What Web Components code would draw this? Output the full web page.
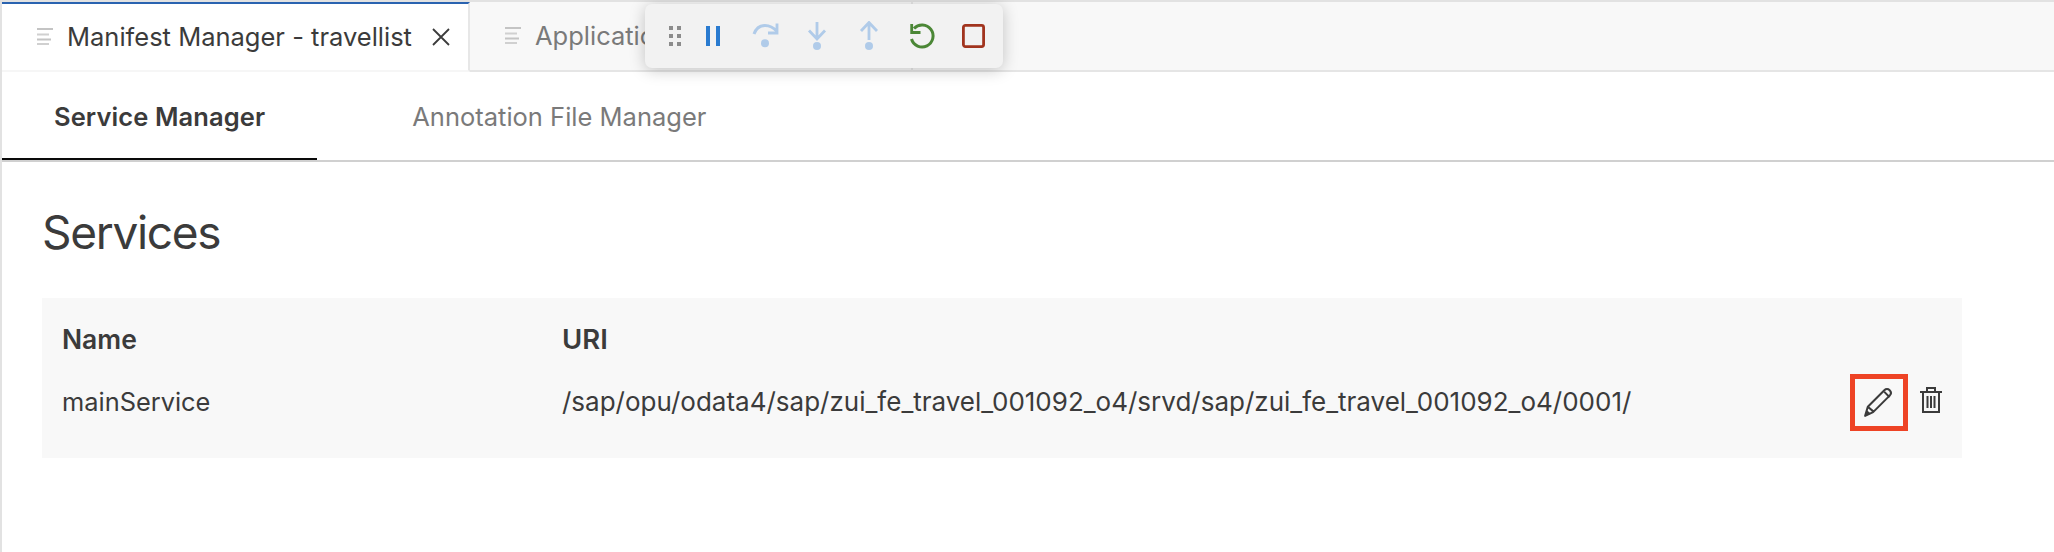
<!DOCTYPE html>
<html>
<head>
<meta charset="utf-8">
<title>Manifest Manager</title>
<style>
    html, body { margin: 0; height: 100%; background: #fff; overflow: hidden; }
    body { font-family: Inter, "Liberation Sans", sans-serif; color: #3b3b3b; }
</style>
</head>
<body>

<template id="editor-tab-template">
    <style>
        :host {
            display: flex;
            align-items: center;
            box-sizing: border-box;
            height: 70px;
            padding: 0 18px 0 35px;
            background: #f8f8f8;
            color: #7a7a7a;
            font-size: 25.5px;
            white-space: nowrap;
            flex: none;
            border-right: 2px solid #e7e7e7;
            border-bottom: 2px solid #e5e5e5;
        }
        :host([active]) {
            background: #fff;
            color: #3b3b3b;
            border-top: 2px solid #2a63b0;
            border-bottom: 2px solid #f6f6f6;
        }
        svg.doc { width: 16px; height: 18px; margin-right: 14px; flex: none; }
        svg.close { width: 18px; height: 18px; margin-left: 20px; flex: none; display: none; }
        :host([active]) svg.close { display: block; }
        .label { overflow: hidden; margin-top: -1px; }
    </style>
    <svg class="doc" viewBox="0 0 16 18"><path d="M0 1h16M0 11.500h14" stroke="#c4c4c4" stroke-width="2" fill="none"/><path d="M0 6.500h12M0 16h12" stroke="#d0d0d0" stroke-width="2" fill="none"/></svg>
    <span class="label"><slot></slot></span>
    <svg class="close" viewBox="0 0 18 18"><path d="M1 1l16 16M17 1L1 17" stroke="#3b3b3b" stroke-width="1.800" fill="none"/></svg>
</template>

<template id="debug-toolbar-template">
    <style>
        :host {
            position: absolute;
            left: 643px;
            top: 4px;
            width: 358px;
            height: 64px;
            display: flex;
            align-items: center;
            gap: 22px;
            padding-left: 24px;
            box-sizing: border-box;
            background: #f2f2f2;
            border-radius: 7px;
            box-shadow: 0 2px 16px rgba(0,0,0,.22);
        }
        svg { display: block; flex: none; width: 30px; height: 30px; }
        svg.grip { width: 12px; height: 20px; margin-right: -5px; }
    </style>
    <svg class="grip" viewBox="0 0 12 20" fill="#8c8c8c">
        <rect x="0" y="0" width="4" height="4"/><rect x="8" y="0" width="4" height="4"/>
        <rect x="0" y="8" width="4" height="4"/><rect x="8" y="8" width="4" height="4"/>
        <rect x="0" y="16" width="4" height="4"/><rect x="8" y="16" width="4" height="4"/>
    </svg>
    <svg viewBox="0 0 30 30"><rect x="8" y="5" width="4" height="20" fill="#2a7bd0"/><rect x="18" y="5" width="4" height="20" fill="#2a7bd0"/></svg>
    <svg viewBox="0 0 30 30"><path d="M4 13C6 7.500 10.500 4.500 15 4.500c4.500 0 8 1.500 12 6" stroke="#b0cbe9" stroke-width="3" fill="none"/><path d="M27 2.500v9.500h-9" stroke="#b0cbe9" stroke-width="2.800" fill="none"/><circle cx="15" cy="22.300" r="4" fill="#b0cbe9"/></svg>
    <svg viewBox="0 0 30 30"><path d="M15 1v17M7 9.500l8 8.500 8-8.500" stroke="#b0cbe9" stroke-width="2.800" fill="none"/><circle cx="15" cy="25" r="4" fill="#b0cbe9"/></svg>
    <svg viewBox="0 0 30 30"><path d="M15 19V2M7 10l8-8.500 8 8.500" stroke="#b0cbe9" stroke-width="2.800" fill="none"/><circle cx="15" cy="25" r="4" fill="#b0cbe9"/></svg>
    <svg viewBox="0 0 30 30"><path d="M8 7.500A11 11 0 1 1 5.500 18" stroke="#4b8736" stroke-width="3" fill="none"/><path d="M5.700 3v8.500h8.800" stroke="#4b8736" stroke-width="2.800" fill="none"/></svg>
    <svg viewBox="0 0 30 30"><rect x="5.400" y="4.400" width="20.200" height="21.200" rx="2" stroke="#a1341e" stroke-width="2.800" fill="none"/></svg>
</template>

<template id="sub-tab-template">
    <style>
        :host {
            display: block;
            box-sizing: border-box;
            height: 90px;
            padding: 2px 52px 0;
            line-height: 85px;
            flex: none;
            font-size: 25.5px;
            color: #7a7a7a;
            white-space: nowrap;
            margin-left: 43px;
        }
        :host([active]) {
            color: #3b3b3b;
            font-weight: 600;
            border-bottom: 2px solid #0a0a0a;
            height: 88px;
            line-height: 85px;
            margin-left: 0;
            letter-spacing: .1px;
        }
    </style>
    <slot></slot>
</template>

<template id="sub-tabs-template">
    <style>
        :host { display: flex; align-items: flex-start; height: 90px; box-shadow: inset 0 -2px 0 #d0d0d0; }
    </style>
    <slot></slot>
</template>

<template id="services-table-template">
    <style>
        :host {
            display: block;
            box-sizing: border-box;
            margin: 0 0 0 40px;
            width: 1920px;
            height: 160px;
            background: #f8f8f8;
            padding: 0 20px;
            font-size: 26px;
            color: #3b3b3b;
        }
        .row { display: grid; grid-template-columns: 500px 1fr; align-items: center; }
        .head { height: 62px; padding-top: 10px; font-weight: 600; font-size: 26.5px; }
        .head .uri { font-size: 27.5px; }
        .body { height: 64px; }
        .actions { display: flex; align-items: center; }
        .cell-name { font-size: 25.4px; margin-top: -2px; }
        .cell-uri { display: flex; align-items: center; justify-content: space-between; }
        .uri-text { margin-top: -2px; }
        .edit {
            box-sizing: border-box;
            width: 58px;
            height: 57px;
            border: 5px solid #ee4325;
            display: flex;
            align-items: center;
            justify-content: center;
            margin-right: 12px;
        }
        svg { display: block; }
        .del { margin-top: -5px; }
    </style>
    <div class="row head"><div>Name</div><div class="uri">URI</div></div>
    <div class="row body">
        <div class="cell-name"><slot name="name"></slot></div>
        <div class="cell-uri">
            <div class="uri-text"><slot name="uri"></slot></div>
            <div class="actions">
                <div class="edit">
                    <svg width="32" height="32" viewBox="0 0 30 30"><path d="M2 28l2.500-8.500L20 4c1.500-1.500 3.500-1.500 5 0s1.500 3.500 0 5L9.500 24.500zM4.500 19.500l6 5M20 5.500l5 5" stroke="#3b3b3b" stroke-width="1.900" fill="none" stroke-linejoin="round"/><path d="M2 28l1.500-5.500 4 3.500z" fill="#3b3b3b"/></svg>
                </div>
                <svg class="del" width="22" height="26" viewBox="0 0 22 26"><path d="M0 5h22M7 5V1h8v4M3 5v20h16V5M7.500 9v12M11 9v12M14.500 9v12" stroke="#3b3b3b" stroke-width="2" fill="none"/></svg>
            </div>
        </div>
    </div>
</template>

<template id="manifest-manager-template">
    <style>
        :host { display: block; height: 552px; box-sizing: border-box; border-left: 2px solid #e2e2e2; position: relative; background: #fff; }
        .editor-tabs {
            display: flex;
            height: 72px;
            box-sizing: border-box;
            padding-top: 2px;
            background: #f8f8f8;
            box-shadow: inset 0 2px 0 #e2e2e2, inset 0 -2px 0 #e5e5e5;
        }
        .second { width: 443px; }
        h1 {
            margin: 0;
            padding: 45px 0 41px 40px;
            font-weight: 400;
            font-size: 46px;
            line-height: 50px;
            letter-spacing: -1.3px;
            color: #3b3b3b;
        }
    </style>
    <div class="editor-tabs">
        <editor-tab active>Manifest Manager - travellist</editor-tab>
        <editor-tab class="second">Application Info - travellist</editor-tab>
    </div>
    <debug-toolbar></debug-toolbar>
    <sub-tabs>
        <sub-tab active>Service Manager</sub-tab>
        <sub-tab>Annotation File Manager</sub-tab>
    </sub-tabs>
    <h1>Services</h1>
    <services-table>
        <span slot="name">mainService</span>
        <span slot="uri">/sap/opu/odata4/sap/zui_fe_travel_001092_o4/srvd/sap/zui_fe_travel_001092_o4/0001/</span>
    </services-table>
</template>

<manifest-manager></manifest-manager>

<script>
    (() => {
        const simple = (tag, templateId) => {
            const template = document.getElementById(templateId);
            class Comp extends HTMLElement {
                constructor() {
                    super();
                    this.attachShadow({ mode: "open" }).appendChild(template.content.cloneNode(true));
                }
            }
            customElements.define(tag, Comp);
        };

        simple("editor-tab", "editor-tab-template");
        simple("debug-toolbar", "debug-toolbar-template");
        simple("sub-tab", "sub-tab-template");
        simple("sub-tabs", "sub-tabs-template");
        simple("services-table", "services-table-template");
        simple("manifest-manager", "manifest-manager-template");
    })();
</script>
</body>
</html>
